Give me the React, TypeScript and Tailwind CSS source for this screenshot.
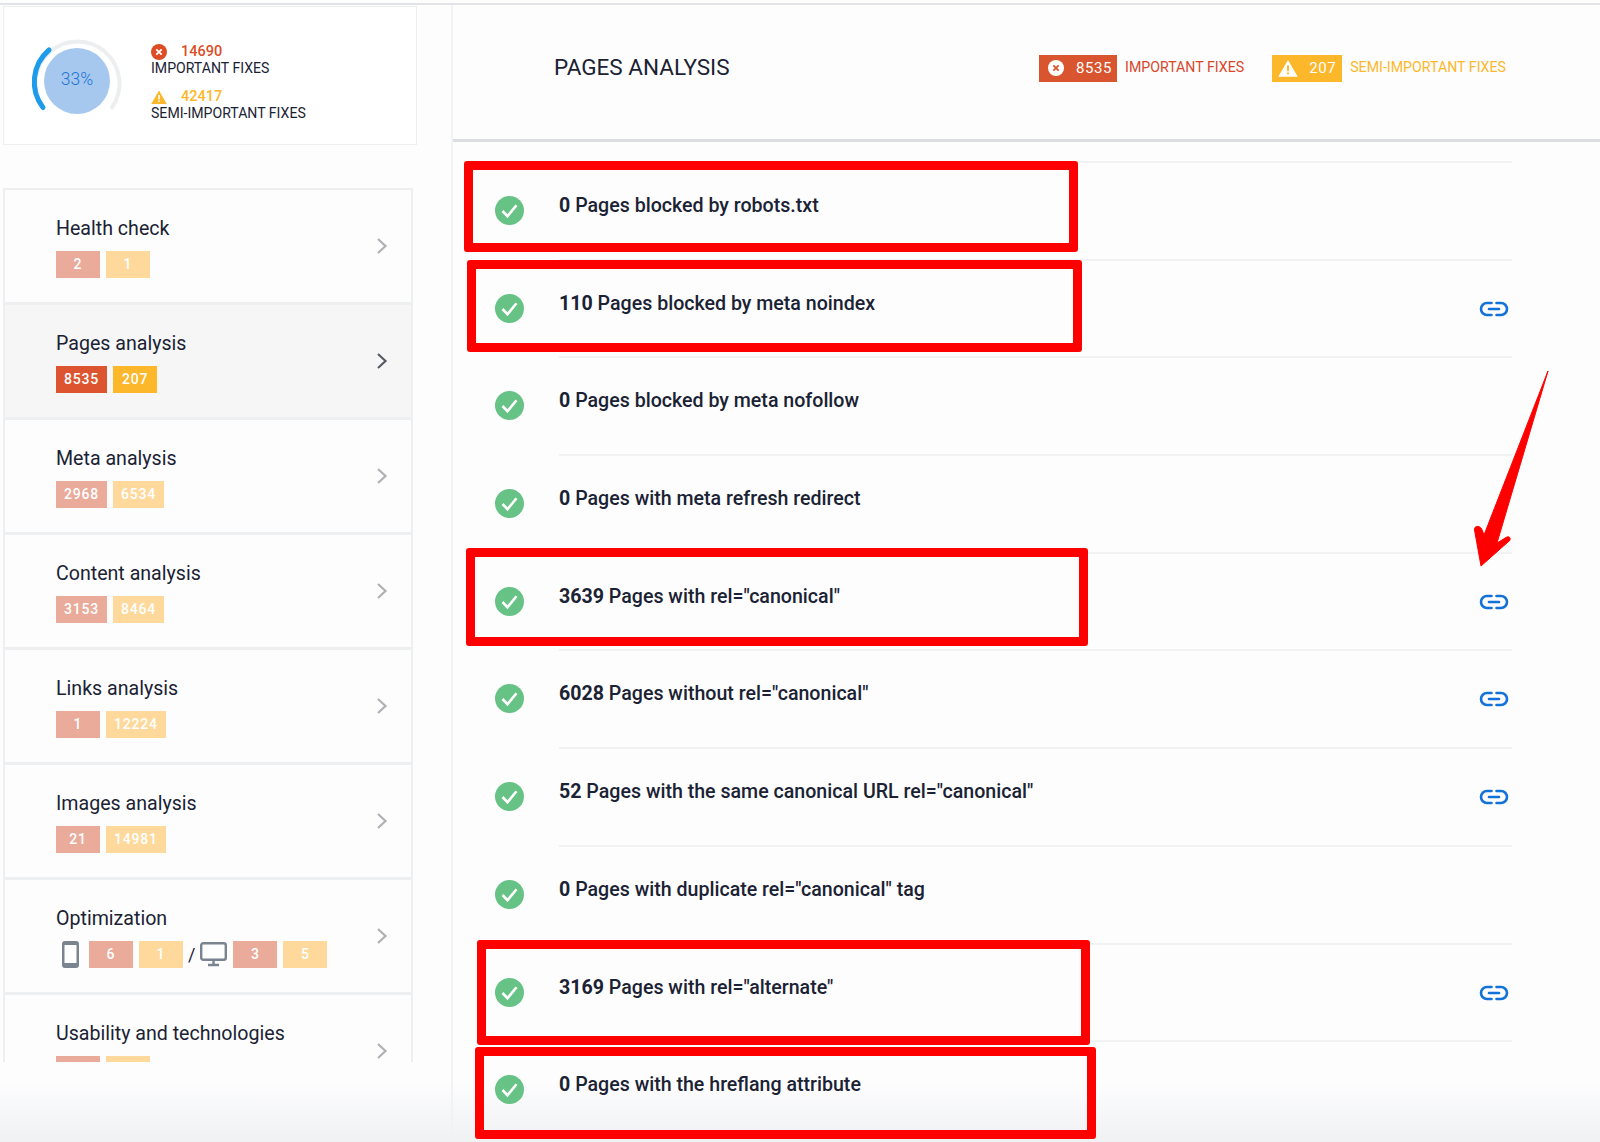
const sections = [
  { name: "Health check", red: "2", yellow: "1" },
  { name: "Pages analysis", red: "8535", yellow: "207", active: true },
  { name: "Meta analysis", red: "2968", yellow: "6534" },
  { name: "Content analysis", red: "3153", yellow: "8464" },
  { name: "Links analysis", red: "1", yellow: "12224" },
  { name: "Images analysis", red: "21", yellow: "14981" },
];

const checks = [
  { count: "0", text: "Pages blocked by robots.txt" },
  { count: "110", text: "Pages blocked by meta noindex", link: true },
  { count: "0", text: "Pages blocked by meta nofollow" },
  { count: "0", text: "Pages with meta refresh redirect" },
  { count: "3639", text: 'Pages with rel="canonical"', link: true },
  { count: "6028", text: 'Pages without rel="canonical"', link: true },
  { count: "52", text: 'Pages with the same canonical URL rel="canonical"', link: true },
  { count: "0", text: 'Pages with duplicate rel="canonical" tag' },
  { count: "3169", text: 'Pages with rel="alternate"', link: true },
  { count: "0", text: "Pages with the hreflang attribute" },
];

// red annotation boxes drawn on top of the screenshot
const marks = [
  "left-[464px] top-[161px] w-[614px] h-[91px]",
  "left-[467px] top-[260px] w-[615px] h-[92px]",
  "left-[466px] top-[548px] w-[622px] h-[98px]",
  "left-[477px] top-[940px] w-[613px] h-[105px]",
  "left-[475px] top-[1047px] w-[621px] h-[92px]",
];

const Badge = ({ value, yellow, strong }: { value?: string; yellow?: boolean; strong?: boolean }) => {
  let tone = "bg-[#eaab9b]";
  if (yellow) tone = strong ? "bg-[#fdb72a]" : "bg-[#fed99b]";
  else if (strong) tone = "bg-[#dc5530]";
  return (
    <span className={`flex h-[27px] min-w-[44px] items-center justify-center px-2 text-[14px] font-medium tracking-[0.8px] text-white ${tone}`}>
      {value}
    </span>
  );
};

const Chevron = ({ dark }: { dark?: boolean }) => (
  <svg width="12" height="18" viewBox="0 0 12 18" fill="none" className={dark ? "text-[#555b63]" : "text-[#aeb0b3]"}>
    <path d="M2 2l7.5 7L2 16" stroke="currentColor" strokeWidth="2.200" />
  </svg>
);

const Check = () => (
  <svg width="29" height="29" viewBox="0 0 29 29">
    <circle cx="14.5" cy="14.5" r="14.5" fill="#66c285" />
    <path d="M7.5 15l5 5.2 9-11" fill="none" stroke="#fff" strokeWidth="2.6" />
  </svg>
);

const LinkIcon = () => (
  <svg width="30" height="16" viewBox="0 0 30 16" fill="none" stroke="#1272d9" strokeWidth="2.6" strokeLinecap="round">
    <path d="M12.5 2H8a6 6 0 0 0 0 12h4.500" />
    <path d="M17.500 2H22a6 6 0 0 1 0 12h-4.500" />
    <path d="M10 8h10" />
  </svg>
);

const ErrorIcon = ({ size, bg, fg }: { size: number; bg: string; fg: string }) => (
  <svg width={size} height={size} viewBox="0 0 16 16">
    <circle cx="8" cy="8" r="8" fill={bg} />
    <path d="M5.300 5.300l5.400 5.400M10.700 5.300l-5.400 5.400" stroke={fg} strokeWidth="1.800" />
  </svg>
);

const WarnIcon = ({ width, height, bg, fg }: { width: number; height: number; bg: string; fg: string }) => (
  <svg width={width} height={height} viewBox="0 0 16 14">
    <path d="M8 0.500L15.800 14H0.200z" fill={bg} />
    <path d="M7.200 5h1.600v4.500H7.200zM7.200 10.500h1.600V12H7.200z" fill={fg} />
  </svg>
);

const Score = () => (
  <div className="relative h-[96px] w-[96px] shrink-0">
    <svg width="96" height="96" viewBox="0 0 96 96" fill="none">
      <path d="M14 74.500A42 42 0 1 1 83 74.500" stroke="#eceef0" strokeWidth="4" strokeLinecap="round" />
      <path d="M14 74.500A42 42 0 0 1 20 17" stroke="#1e9bea" strokeWidth="5" strokeLinecap="round" />
    </svg>
    <div className="absolute left-[15px] top-[15px] flex h-[66px] w-[66px] items-center justify-center rounded-full bg-[#a6c8ef] pb-[3px] text-[17.5px] font-light text-[#1f74d8]">
      33%
    </div>
  </div>
);

const SectionRow = ({ name, active, children }: { name: string; active?: boolean; children: React.ReactNode }) => (
  <div className={`flex h-[115px] shrink-0 items-start justify-between border-b-[3px] border-[#eeeff1] pl-[51px] pr-[23px] ${active ? "bg-[#f6f6f7]" : ""}`}>
    <div className="pt-[26px]">
      <div className="h-[26px] text-[19.6px] leading-[26px] text-[#1a2233]">{name}</div>
      <div className="mt-[9px] flex items-center gap-[6px]">{children}</div>
    </div>
    <div className="pt-[47px]">
      <Chevron dark={active} />
    </div>
  </div>
);

const App = () => {
  return (
    <div className="relative flex h-[1142px] w-[1600px] flex-col overflow-hidden bg-[#fdfdfe] font-['Roboto',sans-serif] text-[#1a2233]">
      <div className="absolute bottom-0 left-0 h-[60px] w-full bg-gradient-to-b from-transparent to-[#f0f1f3]" />

      <div className="relative h-[5px] shrink-0 border-b-2 border-[#e2e3e7]" />

      <div className="relative flex flex-1">
        <aside className="w-[453px] shrink-0 border-r-2 border-[#f1f2f3] pl-[3px] pt-[1px]">
          <div className="flex h-[139px] w-[414px] items-start border border-[#eceef0] bg-white pl-[25px] pt-[26px]">
            <Score />
            <div className="pl-[26px] pt-[11px] text-[14.1px] leading-[16px]">
              <div className="flex h-[16px] items-center">
                <ErrorIcon size={16} bg="#dc4c25" fg="#fff" />
                <span className="ml-[14px] text-[14.5px] font-medium text-[#dc4c25]">14690</span>
              </div>
              <div>IMPORTANT FIXES</div>
              <div className="mt-[13px] flex h-[16px] items-center">
                <WarnIcon width={16} height={14} bg="#fdb72a" fg="#fff" />
                <span className="ml-[14px] text-[14.5px] font-medium text-[#fdb72a]">42417</span>
              </div>
              <div>SEMI-IMPORTANT FIXES</div>
            </div>
          </div>

          <div className="mt-[43px] flex h-[874px] w-[410px] flex-col overflow-hidden border-x-2 border-t-2 border-[#eeeff1]">
            {sections.map((s) => (
              <SectionRow key={s.name} name={s.name} active={s.active}>
                <Badge value={s.red} strong={s.active} />
                <Badge value={s.yellow} yellow strong={s.active} />
              </SectionRow>
            ))}
            <SectionRow name="Optimization">
              <svg width="18" height="27" viewBox="0 0 18 27" className="ml-[6px] mr-[3px]">
                <rect x="0" y="0" width="17" height="27" rx="3" fill="#7a8490" />
                <rect x="2.500" y="4" width="12" height="18" fill="#fdfdfe" />
              </svg>
              <Badge value="6" />
              <Badge value="1" yellow />
              <span className="-mx-[1px] text-[18px] leading-none">/</span>
              <svg width="27" height="25" viewBox="0 0 27 25" fill="none" stroke="#7a8490" strokeWidth="2.400">
                <rect x="1.200" y="1.200" width="24.600" height="16.600" rx="2" />
                <path d="M13.500 18v4M8 23h11" />
              </svg>
              <Badge value="3" />
              <Badge value="5" yellow />
            </SectionRow>
            <SectionRow name="Usability and technologies">
              <Badge />
              <Badge yellow />
            </SectionRow>
          </div>
        </aside>

        <main className="flex-1">
          <header className="flex h-[137px] items-center border-b-[3px] border-[#dcdde0] pb-[8px] pl-[101px] pr-[94px]">
            <h1 className="text-[22.5px] font-normal">PAGES ANALYSIS</h1>
            <div className="ml-auto flex items-center text-[14.2px]">
              <span className="flex h-[27px] w-[78px] items-center bg-[#d9552f] pl-[9px] text-[15px] tracking-[0.6px] text-white">
                <ErrorIcon size={16} bg="#fff" fg="#d9552f" />
                <span className="ml-[12px]">8535</span>
              </span>
              <span className="ml-[8px] text-[#d9472a]">IMPORTANT FIXES</span>
              <span className="ml-[28px] flex h-[27px] w-[70px] items-center bg-[#fdb72a] pl-[6px] text-[15px] tracking-[0.6px] text-white">
                <WarnIcon width={20} height={18} bg="#fff" fg="#fdb72a" />
                <span className="ml-[11px]">207</span>
              </span>
              <span className="ml-[8px] text-[#fdb72a]">SEMI-IMPORTANT FIXES</span>
            </div>
          </header>

          <div className="pt-[19px]">
            {checks.map((c) => (
              <div key={c.count + c.text} className="flex h-[97.7px]">
                <div className="w-[106px] shrink-0 pl-[42px] pt-[35px]">
                  <Check />
                </div>
                <div className="flex w-[953px] items-start justify-between border-t-2 border-[#f1f2f3] pr-[3px]">
                  <div className="pt-[31px] text-[19.6px] leading-[24px]">
                    <span className="font-bold">{c.count}</span> <span className="font-medium">{c.text}</span>
                  </div>
                  {c.link && (
                    <div className="pt-[40px]">
                      <LinkIcon />
                    </div>
                  )}
                </div>
              </div>
            ))}
          </div>
        </main>
      </div>

      {marks.map((m) => (
        <div key={m} className={`pointer-events-none absolute rounded-[3px] border-[9px] border-[#ff0000] ${m}`} />
      ))}

      <svg width="1600" height="1142" className="pointer-events-none absolute left-0 top-0" fill="#ff0000" stroke="#ff0000" strokeWidth="1" strokeLinejoin="round">
        <path d="M1548 371L1497 543L1506 537.500C1510 535 1512 540 1508 542L1481 566L1474.500 530C1474 525 1481 525 1482.500 531L1484 535Z" />
      </svg>
    </div>
  );
};

export default App;
